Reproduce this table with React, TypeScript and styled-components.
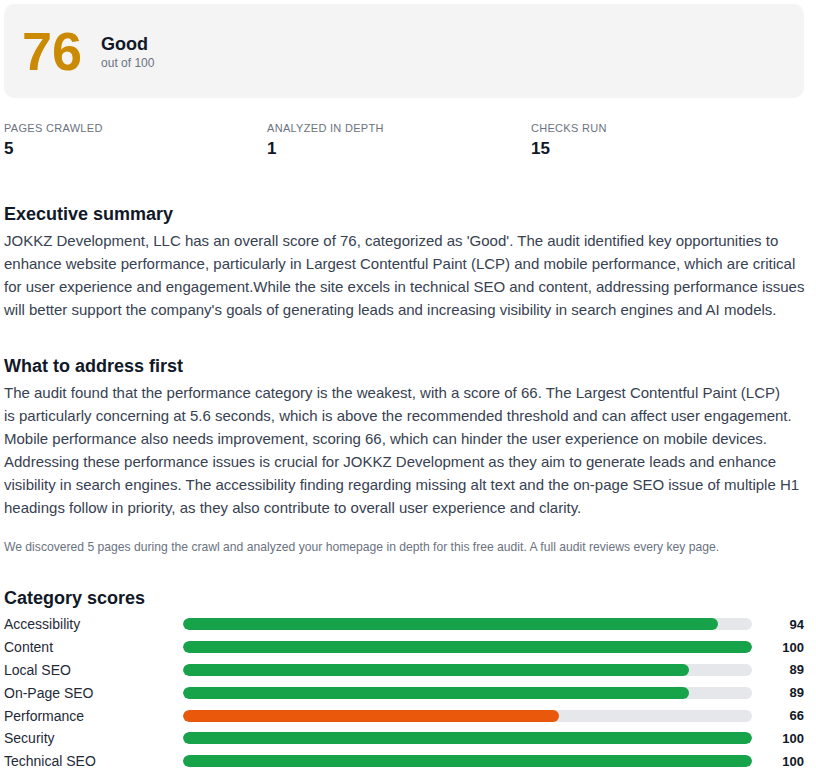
import React from 'react';
import styled, { createGlobalStyle } from 'styled-components';

const GlobalStyle = createGlobalStyle`
  html, body {
    margin: 0;
    padding: 0;
    background: #ffffff;
  }
  body {
    font-family: "Liberation Sans", Arial, sans-serif;
    color: #1f2937;
  }
`;

interface Category {
  name: string;
  score: number;
}

const CATEGORIES: Category[] = [
  { name: 'Accessibility', score: 94 },
  { name: 'Content', score: 100 },
  { name: 'Local SEO', score: 89 },
  { name: 'On-Page SEO', score: 89 },
  { name: 'Performance', score: 66 },
  { name: 'Security', score: 100 },
  { name: 'Technical SEO', score: 100 },
];

const STATS = [
  { label: 'Pages crawled', value: '5' },
  { label: 'Analyzed in depth', value: '1' },
  { label: 'Checks run', value: '15' },
];

// lines kept as the report breaks them
const SUMMARY = [
  "JOKKZ Development, LLC has an overall score of 76, categorized as 'Good'. The audit identified key opportunities to",
  'enhance website performance, particularly in Largest Contentful Paint (LCP) and mobile performance, which are critical',
  'for user experience and engagement.While the site excels in technical SEO and content, addressing performance issues',
  "will better support the company's goals of generating leads and increasing visibility in search engines and AI models.",
];

const PRIORITIES = [
  'The audit found that the performance category is the weakest, with a score of 66. The Largest Contentful Paint (LCP)',
  'is particularly concerning at 5.6 seconds, which is above the recommended threshold and can affect user engagement.',
  'Mobile performance also needs improvement, scoring 66, which can hinder the user experience on mobile devices.',
  'Addressing these performance issues is crucial for JOKKZ Development as they aim to generate leads and enhance',
  'visibility in search engines. The accessibility finding regarding missing alt text and the on-page SEO issue of multiple H1',
  'headings follow in priority, as they also contribute to overall user experience and clarity.',
];

const Page = styled.div`
  width: 800px;
  padding: 4px;
`;

const ScoreCard = styled.div`
  display: flex;
  align-items: center;
  gap: 19px;
  height: 94px;
  box-sizing: border-box;
  padding: 0 18px;
  background: #f4f4f5;
  border-radius: 10px;
`;

const BigScore = styled.div`
  font-size: 54px;
  font-weight: 700;
  line-height: 1;
  color: #ca8a04;
`;

const ScoreText = styled.div`
  display: flex;
  flex-direction: column;
  gap: 1px;
  margin-top: 2px;
`;

const Rating = styled.div`
  font-size: 18px;
  font-weight: 700;
  color: #111827;
`;

const OutOf = styled.div`
  font-size: 12px;
  color: #6b7280;
`;

const StatsGrid = styled.div`
  display: grid;
  grid-template-columns: 263px 264px 1fr;
  margin-top: 24px;
`;

const Stat = styled.div`
  display: flex;
  flex-direction: column;
  gap: 5px;
`;

const StatLabel = styled.div`
  font-size: 11px;
  text-transform: uppercase;
  letter-spacing: 0.3px;
  color: #6b7280;
`;

const StatValue = styled.div`
  font-size: 17px;
  font-weight: 700;
  color: #111827;
`;

const Section = styled.section<{ $top: number }>`
  margin-top: ${(p) => p.$top}px;
`;

const Heading = styled.h2`
  margin: 0 0 3px;
  font-size: 18px;
  line-height: 24px;
  font-weight: 700;
  color: #111827;
`;

const Body = styled.p`
  margin: 0;
  font-size: 15px;
  line-height: 23px;
  color: #374151;
  white-space: nowrap;
`;

const Note = styled.p`
  margin: 21px 0 0;
  font-size: 12.15px;
  color: #6b7280;
`;

const ScoreList = styled.div`
  display: flex;
  flex-direction: column;
`;

const ScoreRow = styled.div`
  display: grid;
  grid-template-columns: 179px 569px 1fr;
  align-items: center;
  height: 22.8px;
`;

const RowLabel = styled.div`
  font-size: 14px;
  color: #1f2937;
`;

const Track = styled.div`
  height: 12px;
  border-radius: 6px;
  background: #e5e7eb;
  overflow: hidden;
`;

const Fill = styled.div<{ $warn: boolean }>`
  height: 100%;
  border-radius: 6px;
  background: ${(p) => (p.$warn ? '#ea580c' : '#16a34a')};
`;

const RowScore = styled.div`
  text-align: right;
  font-size: 13px;
  font-weight: 700;
  color: #111827;
`;

const Paragraph = ({ lines }: { lines: string[] }) => (
  <Body>
    {lines.map((line, i) => (
      <React.Fragment key={i}>
        {line}
        {i < lines.length - 1 && <br />}
      </React.Fragment>
    ))}
  </Body>
);

const App = () => (
  <Page>
    <GlobalStyle />
    <ScoreCard>
      <BigScore>76</BigScore>
      <ScoreText>
        <Rating>Good</Rating>
        <OutOf>out of 100</OutOf>
      </ScoreText>
    </ScoreCard>

    <StatsGrid>
      {STATS.map((s) => (
        <Stat key={s.label}>
          <StatLabel>{s.label}</StatLabel>
          <StatValue>{s.value}</StatValue>
        </Stat>
      ))}
    </StatsGrid>

    <Section $top={43}>
      <Heading>Executive summary</Heading>
      <Paragraph lines={SUMMARY} />
    </Section>

    <Section $top={33}>
      <Heading>What to address first</Heading>
      <Paragraph lines={PRIORITIES} />
      <Note>
        We discovered 5 pages during the crawl and analyzed your homepage in depth for this free
        audit. A full audit reviews every key page.
      </Note>
    </Section>

    <Section $top={32}>
      <Heading>Category scores</Heading>
      <ScoreList>
        {CATEGORIES.map((c) => (
          <ScoreRow key={c.name}>
            <RowLabel>{c.name}</RowLabel>
            <Track>
              <Fill $warn={c.score < 70} style={{ width: `${c.score}%` }} />
            </Track>
            <RowScore>{c.score}</RowScore>
          </ScoreRow>
        ))}
      </ScoreList>
    </Section>
  </Page>
);

export default App;
